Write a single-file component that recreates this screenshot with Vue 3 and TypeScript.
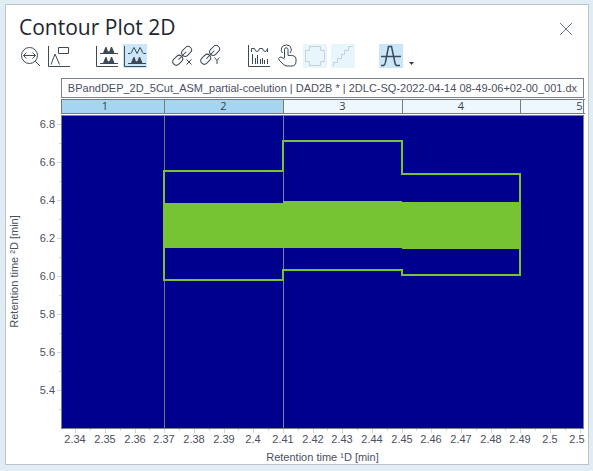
<script setup lang="ts">
import { computed, onBeforeUnmount, onMounted, ref } from 'vue'

interface Cut {
  id: number
  from: number
  to: number
  selected: boolean
}

interface Band {
  from: number
  to: number
  outerTop: number
  outerBottom: number
  innerTop: number
  innerBottom: number
}

const sampleName = 'BPandDEP_2D_5Cut_ASM_partial-coelution | DAD2B * | 2DLC-SQ-2022-04-14 08-49-06+02-00_001.dx'

const cuts: Cut[] = [
  { id: 1, from: 2.33, to: 2.37, selected: true },
  { id: 2, from: 2.37, to: 2.41, selected: true },
  { id: 3, from: 2.41, to: 2.45, selected: false },
  { id: 4, from: 2.45, to: 2.49, selected: false },
  { id: 5, from: 2.49, to: 2.53, selected: false },
]

const bands: Band[] = [
  { from: 2.37, to: 2.41, outerTop: 6.554, outerBottom: 5.98, innerTop: 6.386, innerBottom: 6.149 },
  { from: 2.41, to: 2.45, outerTop: 6.712, outerBottom: 6.033, innerTop: 6.396, innerBottom: 6.149 },
  { from: 2.45, to: 2.49, outerTop: 6.538, outerBottom: 6.006, innerTop: 6.391, innerBottom: 6.144 },
]

const xMin = 2.3352
const xMax = 2.5115
const yMin = 5.2
const yMax = 6.848
const plotTop = 17

const host = ref<HTMLElement | null>(null)
const width = ref(582)
const height = ref(366)
let observer: ResizeObserver | undefined

function measure() {
  if (!host.value) return
  width.value = host.value.clientWidth
  height.value = host.value.clientHeight
}

onMounted(() => {
  measure()
  observer = new ResizeObserver(measure)
  if (host.value) observer.observe(host.value)
})
onBeforeUnmount(() => observer?.disconnect())

const left = 55
const right = computed(() => width.value - 4)
const bottom = computed(() => height.value - 36)

function x(v: number): number {
  return Math.round(left + ((v - xMin) / (xMax - xMin)) * (right.value - left))
}
function y(v: number): number {
  return Math.round(plotTop + ((yMax - v) / (yMax - yMin)) * (bottom.value - plotTop))
}

const xTicks = Array.from({ length: 35 }, (_, i) => 2.34 + i * 0.005).map((value, i) => ({
  value,
  label: i % 2 === 0 ? String(Number(value.toFixed(2))) : '',
}))
const yTicks = Array.from({ length: 16 }, (_, i) => 6.8 - i * 0.1).map((value, i) => ({
  value,
  label: i % 2 === 0 ? value.toFixed(1) : '',
}))

const outline = computed(() => {
  const top = bands.flatMap((b) => [[b.from, b.outerTop], [b.to, b.outerTop]])
  const low = [...bands].reverse().flatMap((b) => [[b.to, b.outerBottom], [b.from, b.outerBottom]])
  return [...top, ...low].map(([px, py]) => `${x(px)},${y(py)}`).join(' ')
})
</script>

<template>
  <main class="page">
    <section class="panel">
      <header class="head">
        <h1>Contour Plot 2D</h1>
        <button class="close" type="button" aria-label="Close">
          <svg width="14" height="14" viewBox="0 0 14 14"><path d="M1 1 13 13M13 1 1 13" /></svg>
        </button>
      </header>

      <div class="toolbar" role="toolbar" aria-label="Plot tools">
        <div class="group">
          <button class="tool" type="button" aria-label="Full range">
            <svg viewBox="0 0 24 24"><circle cx="10.5" cy="11.5" r="8" /><path d="M16.3 17.2 21 22M4.5 11.5h12M7.5 8.5l-3 3 3 3M13.5 8.5l3 3-3 3" /></svg>
          </button>
          <button class="tool" type="button" aria-label="Annotations">
            <svg viewBox="0 0 24 24"><path d="M1.5 2v20.5H23M11.5 3.5h10v6h-10zM4 20.500 8 10l4.500 10.500" /></svg>
          </button>
        </div>
        <div class="group">
          <button class="tool" type="button" aria-label="Filled plots">
            <svg viewBox="0 0 24 24"><path d="M1.500 2v20.500H23M5 9.500h18M5 19.500h18" /><path class="solid" d="M7 9.500q1.500-.5 2-3L10.500 3h1L13 7.500 14.500 7 16 3h1l1.500 3.500q.5 2.500 2 3zM7 19.500q1.500-.5 2-3l1.500-3.500h1l1.500 4.500 1.500-.5L16 13h1l1.500 3.500q.5 2.500 2 3z" /></svg>
          </button>
          <button class="tool on" type="button" aria-label="Mixed plots" aria-pressed="true">
            <svg viewBox="0 0 24 24"><path d="M1.500 2v20.500H23M5 19.500h18M5 9.500h2.500Q9 8.500 9.500 6L11 3.500 14 9.500 17 3.500 18.500 6q.5 2.500 2 3.500H23" /><path class="solid" d="M7 19.500q1.500-.5 2-3l1.500-3.500h1l1.500 4.500 1.500-.5L16 13h1l1.500 3.500q.5 2.500 2 3z" /></svg>
          </button>
        </div>
        <div class="group">
          <button class="tool" type="button" aria-label="Link X axes">
            <svg viewBox="0 0 24 24"><g transform="rotate(-45 11 12)"><rect x="-.5" y="8.500" width="11" height="7" rx="3.500" /><rect x="12" y="8.500" width="11" height="7" rx="3.500" /><path d="M6 12h11" /></g><path d="m15.500 15.500 5 5M20.500 15.500l-5 5" /></svg>
          </button>
          <button class="tool" type="button" aria-label="Link Y axes">
            <svg viewBox="0 0 24 24"><g transform="rotate(-45 11 11)"><rect x="-.5" y="7.500" width="11" height="7" rx="3.500" /><rect x="12" y="7.500" width="11" height="7" rx="3.500" /><path d="M6 11h11" /></g><path d="m15.500 13.500 2.500 3 2.500-3M18 16.500V20" /></svg>
          </button>
        </div>
        <div class="group">
          <button class="tool" type="button" aria-label="Signals">
            <svg viewBox="0 0 24 24"><path d="M1.500 1v21.500H23M4.500 8V4.500h3Q8 7.500 10 7.500t2.500-3h3Q16 7.500 18 7.500t2.500-3V8M5.500 20V10M8.500 20v-6M10.500 20V11M13.500 20v-5M15.500 20v-6M17.500 20v-4M20.500 20v-5" /></svg>
          </button>
          <button class="tool" type="button" aria-label="Touch mode">
            <svg viewBox="0 0 24 24"><path d="M9.500 14V5.500a1.750 1.750 0 0 1 3.500 0v6q3.500-.5 6 .5 2 .5 2 3v2q0 5-4 5h-5q-2 0-4-2l-4-4q-1-1.500.5-2.500t2.500 0L9.500 15M7.500 9Q5.500 7 6.500 4T11.500 1t4.500 3q1 3-1 5" /></svg>
          </button>
          <button class="tool off" type="button" aria-label="Merge regions" disabled>
            <svg viewBox="0 0 24 24"><path d="M6.500 2.500h11v4h4v11h-4v4h-11v-4h-4v-11h4z" /></svg>
          </button>
          <button class="tool off" type="button" aria-label="Stepped view" disabled>
            <svg viewBox="0 0 24 24"><path d="M2.500 22v-3.500h4v-4h4v-4h3v-4h4v-4H22" /></svg>
          </button>
        </div>
        <div class="group">
          <button class="tool on" type="button" aria-label="Peak region" aria-pressed="true">
            <svg viewBox="0 0 24 24"><path class="mid" d="M2 12.500h20M2 21.500h2.500Q6 21 6.500 18L9.500 2.500h3L16 19q.5 2.500 2 2.500h3" /></svg>
          </button>
          <button class="more" type="button" aria-label="More">
            <svg width="5" height="3" viewBox="0 0 5 3"><path d="M0 0h5L2.500 3z" /></svg>
          </button>
        </div>
      </div>

      <div class="sample">{{ sampleName }}</div>

      <div ref="host" class="chart">
        <svg class="plot" :width="width" :height="height" role="img" aria-label="Contour plot">
          <defs>
            <clipPath id="inside"><rect :x="left" y="0" :width="right - left + 1" :height="height" /></clipPath>
          </defs>

          <g clip-path="url(#inside)">
            <g v-for="cut in cuts" :key="cut.id">
              <rect :class="['cut', { selected: cut.selected }]" :x="x(cut.from) + 0.5" y="1.5" :width="x(cut.to) - x(cut.from)" height="14" />
              <text class="cut-label" :x="(x(cut.from) + x(cut.to)) / 2" y="12">{{ cut.id }}</text>
            </g>
          </g>

          <rect class="frame" :x="left + 0.5" y="1.5" :width="right - left - 1" height="14" />
          <rect class="field" :x="left + 0.5" :y="plotTop + 0.5" :width="right - left - 1" :height="bottom - plotTop" />
          <path class="cursor" :d="`M${x(2.37) + 0.5} ${plotTop}V${bottom}`" />
          <path class="cursor light" :d="`M${x(2.41) + 0.5} ${plotTop}V${bottom}`" />

          <rect
            v-for="b in bands"
            :key="b.from"
            class="band"
            :x="x(b.from)"
            :y="y(b.innerTop)"
            :width="x(b.to) - x(b.from)"
            :height="y(b.innerBottom) - y(b.innerTop)"
          />
          <polygon class="outline" :points="outline" />

          <g v-for="t in yTicks" :key="t.value">
            <path class="tick" :d="`M${left} ${y(t.value) + 0.5}h${t.label ? -4 : -2}`" />
            <text v-if="t.label" class="y-label" :x="left - 6" :y="y(t.value) + 4">{{ t.label }}</text>
          </g>
          <g clip-path="url(#inside)">
            <g v-for="t in xTicks" :key="t.value">
              <path class="tick" :d="`M${x(t.value) + 0.5} ${bottom + 1}v${t.label ? 4 : 2}`" />
              <text v-if="t.label" class="x-label" :x="x(t.value)" :y="bottom + 15">{{ t.label }}</text>
            </g>
          </g>

          <text class="x-label" :x="(left + right) / 2" :y="bottom + 33">Retention time ¹D [min]</text>
          <text class="x-label" :transform="`translate(12 ${(plotTop + bottom) / 2}) rotate(-90)`">Retention time ²D [min]</text>
        </svg>
      </div>
    </section>
  </main>
</template>

<style>
body {
  margin: 0;
  background: #e1edf5;
}
</style>

<style scoped>
.page {
  box-sizing: border-box;
  min-height: 100vh;
  padding: 4px 4px 6px 5px;
  display: flex;
  font-family: "Liberation Sans", Arial, sans-serif;
  font-size: 11px;
  color: #4b5061;
}
.panel {
  flex: 1;
  min-width: 0;
  display: flex;
  flex-direction: column;
  background: #fff;
  border: 1px solid #bfc3c7;
}
.head {
  height: 39px;
  padding: 0 15px 0 13px;
  display: flex;
  align-items: center;
  justify-content: space-between;
}
h1 {
  margin: 0;
  padding-top: 4px;
  font: 400 21px/28px "Open Sans", "Noto Sans", sans-serif;
  color: #20262d;
}
button {
  padding: 0;
  border: 0;
  background: transparent;
}
.close {
  width: 14px;
  height: 14px;
  margin-top: 8px;
}
.close svg {
  display: block;
  fill: none;
  stroke: #727a82;
}
.toolbar {
  display: flex;
  gap: 24px;
  padding: 0 13px;
}
.group {
  display: flex;
  gap: 4px;
}
.tool {
  width: 24px;
  height: 24px;
}
.tool svg {
  display: block;
  fill: none;
  stroke: #3c4957;
}
.tool .solid {
  fill: #3c4957;
  stroke: none;
}
.tool .mid {
  stroke-width: 1.5px;
}
.tool.on {
  background: #cbe6f8;
}
.tool.off {
  background: #e9f5fc;
}
.tool.off svg {
  stroke: #c6d2d9;
}
.more {
  width: 9px;
  display: flex;
  align-items: center;
  justify-content: center;
  padding-top: 14px;
}
.more svg {
  fill: #303b48;
}
.sample {
  box-sizing: border-box;
  height: 20px;
  margin: 10px 4px 0 55px;
  padding: 0 4px;
  border: 1px solid #7b8099;
  line-height: 18px;
  text-align: center;
  white-space: nowrap;
  overflow: hidden;
}
.chart {
  flex: 1;
  min-height: 200px;
  display: grid;
  overflow: hidden;
}
.plot {
  display: block;
}
.plot text {
  fill: #4b5061;
}
.cut {
  fill: #edf7fd;
  stroke: #777b7d;
}
.cut.selected {
  fill: #a5d5f0;
}
.frame {
  fill: none;
  stroke: #777b7d;
}
.field {
  fill: #00008f;
  stroke: #7b7f96;
}
.cursor {
  stroke: #777777;
}
.cursor.light {
  stroke: #7880a8;
}
.band {
  fill: #76c333;
}
.outline {
  fill: none;
  stroke: #76c333;
  stroke-width: 2px;
}
.tick {
  stroke: #d3d5dc;
}
.plot .cut-label {
  font-family: "Open Sans", "Noto Sans", sans-serif;
  text-anchor: middle;
  fill: #384350;
}
.x-label {
  text-anchor: middle;
}
.y-label {
  text-anchor: end;
}
</style>
